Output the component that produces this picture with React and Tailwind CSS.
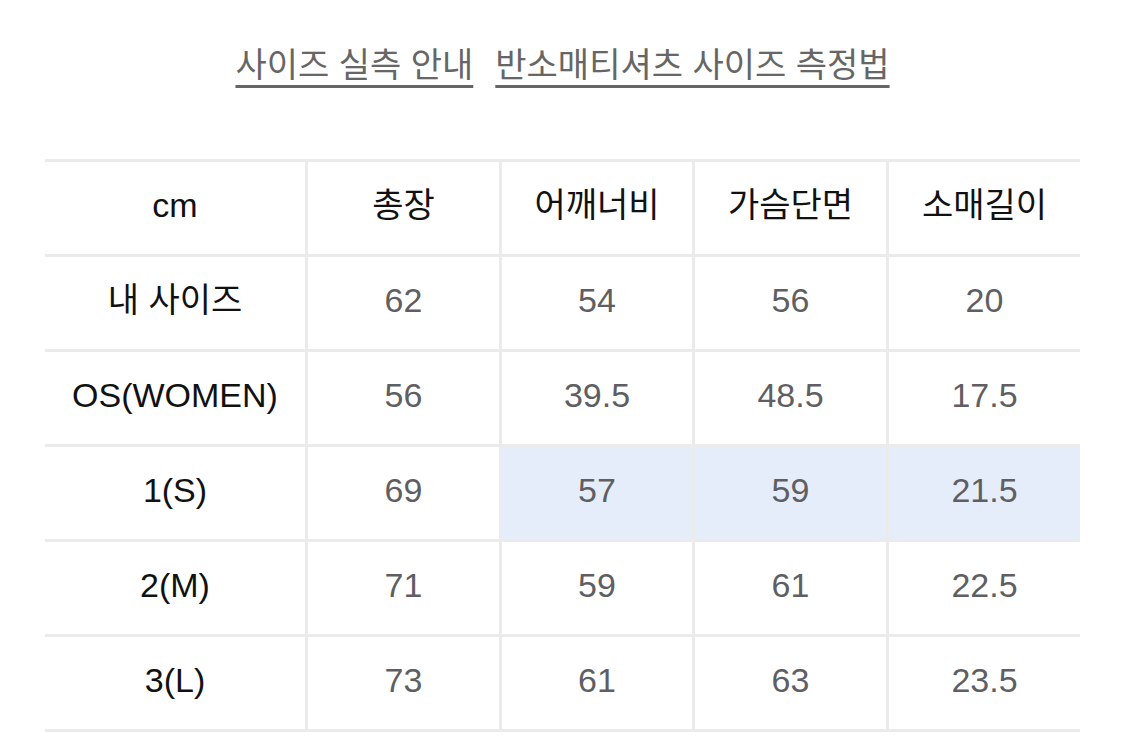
import React from 'react';

const header = ['cm', '총장', '어깨너비', '가슴단면', '소매길이'];

const rows = [
  { label: '내 사이즈', values: ['62', '54', '56', '20'] },
  { label: 'OS(WOMEN)', values: ['56', '39.5', '48.5', '17.5'] },
  { label: '1(S)', values: ['69', '57', '59', '21.5'], highlight: true },
  { label: '2(M)', values: ['71', '59', '61', '22.5'] },
  { label: '3(L)', values: ['73', '61', '63', '23.5'] },
];

function Row({ label, values, head, highlight, last }) {
  return (
    <div
      className={`grid grid-cols-[260px_194px_193px_194px_194px] border-t-[3px] border-[#ebebeb] ${last ? 'border-b-[3px]' : ''}`}
    >
      <div className="h-[92px] pb-[5px] flex items-center justify-center text-[34px] text-[#111]">{label}</div>
      {values.map((v, i) => (
        <div
          key={i}
          className={`h-[92px] pb-[5px] flex items-center justify-center text-[34px] border-l-[3px] border-[#ebebeb] ${
            head ? 'text-[#111]' : 'text-[#5f5f63]'
          } ${highlight && i > 0 ? 'bg-[#e6edfa]' : ''}`}
        >
          {v}
        </div>
      ))}
    </div>
  );
}

export default function App() {
  return (
    <div
      className="w-[1125px] h-[754px] bg-white overflow-hidden"
      style={{ fontFamily: '"Liberation Sans", "Noto Sans CJK KR", sans-serif' }}
    >
      <div className="pt-[40px] flex justify-center gap-[22px] text-[34px] text-[#666]">
        <span className="underline decoration-[3px] underline-offset-[8px]">사이즈 실측 안내</span>
        <span className="underline decoration-[3px] underline-offset-[8px]">반소매티셔츠 사이즈 측정법</span>
      </div>
      <div className="ml-[45px] mt-[68px] w-[1035px]">
        <Row label={header[0]} values={header.slice(1)} head />
        {rows.map((r, i) => (
          <Row key={r.label} label={r.label} values={r.values} highlight={r.highlight} last={i === rows.length - 1} />
        ))}
      </div>
    </div>
  );
}
